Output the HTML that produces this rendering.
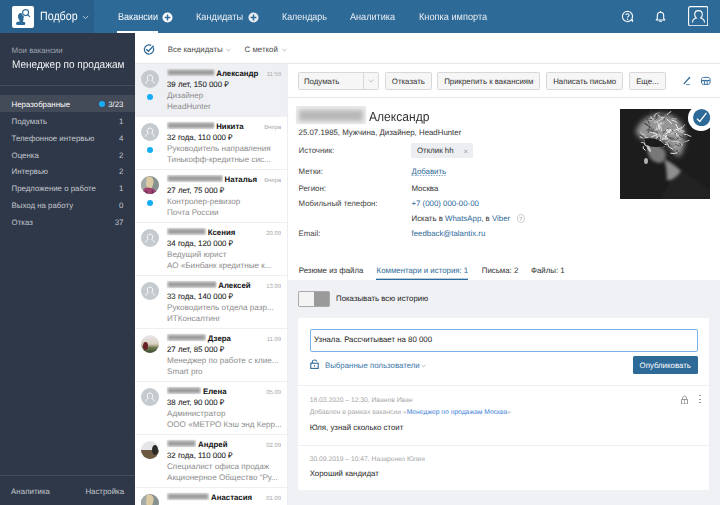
<!DOCTYPE html>
<html><head><meta charset="utf-8"><style>
html,body{margin:0;padding:0;width:720px;height:505px;overflow:hidden;background:#fff;font-family:"Liberation Sans", sans-serif;text-rendering:geometricPrecision;}
</style></head><body>
<div style="position:absolute;left:0px;top:0px;width:720px;height:33px;background:#2e6a98"></div>
<div style="position:absolute;left:0px;top:0px;width:94px;height:33px;background:#285f8b"></div>
<div style="position:absolute;left:117px;top:31px;width:41px;height:2px;background:#fff"></div>
<div style="position:absolute;left:12px;top:6px;width:22px;height:22px;background:#fff;border-radius:2px"></div>
<svg style="position:absolute;left:12px;top:6px" width="22" height="22" viewBox="0 0 22 22">
<ellipse cx="8.9" cy="10.6" rx="2.9" ry="3.5" fill="#2e6a98"/>
<path d="M7.2 12.5 L7.6 16.5 L10.6 16.5 L11.6 13 Z" fill="#2e6a98"/>
<rect x="4.1" y="15.8" width="9.2" height="3.1" rx="1.5" fill="#2e6a98"/>
<circle cx="13.6" cy="6.6" r="3.9" fill="#fff"/><circle cx="13.6" cy="6.6" r="3" fill="#fff" stroke="#2e6a98" stroke-width="1.1"/>
<path d="M15.9 8.9 L17.6 10.6" stroke="#2e6a98" stroke-width="1.2" stroke-linecap="round"/>
</svg>
<div style="position:absolute;left:39.7px;top:10.00px;font-size:12px;line-height:12px;color:#fff;font-weight:400;white-space:nowrap;transform:scaleX(0.89);transform-origin:left center;">Подбор</div>
<svg style="position:absolute;left:82px;top:15px" width="7" height="5" viewBox="0 0 7 5"><path d="M0.8 1 L3.5 3.6 L6.2 1" stroke="#c5d3df" stroke-width="0.9" fill="none"/></svg>
<div style="position:absolute;left:117.5px;top:13.00px;font-size:10px;line-height:10px;color:#fff;font-weight:400;white-space:nowrap;transform:scaleX(0.907);transform-origin:left center;">Вакансии</div>
<div style="position:absolute;left:196.2px;top:13.00px;font-size:10px;line-height:10px;color:#e9eef3;font-weight:400;white-space:nowrap;transform:scaleX(0.918);transform-origin:left center;">Кандидаты</div>
<div style="position:absolute;left:282.2px;top:13.00px;font-size:10px;line-height:10px;color:#e9eef3;font-weight:400;white-space:nowrap;transform:scaleX(0.889);transform-origin:left center;">Календарь</div>
<div style="position:absolute;left:350px;top:13.00px;font-size:10px;line-height:10px;color:#e9eef3;font-weight:400;white-space:nowrap;transform:scaleX(0.911);transform-origin:left center;">Аналитика</div>
<div style="position:absolute;left:418.9px;top:13.00px;font-size:10px;line-height:10px;color:#e9eef3;font-weight:400;white-space:nowrap;transform:scaleX(0.92);transform-origin:left center;">Кнопка импорта</div>
<svg style="position:absolute;left:162.3px;top:11.600000000000001px" width="11" height="11" viewBox="0 0 11 11"><circle cx="5.5" cy="5.5" r="5" fill="#fff"/><path d="M5.5 2.6 V8.4 M2.6 5.5 H8.4" stroke="#2e6a98" stroke-width="1.5"/></svg>
<svg style="position:absolute;left:248.1px;top:11.600000000000001px" width="11" height="11" viewBox="0 0 11 11"><circle cx="5.5" cy="5.5" r="5" fill="#e9eef3"/><path d="M5.5 2.6 V8.4 M2.6 5.5 H8.4" stroke="#2e6a98" stroke-width="1.5"/></svg>
<svg style="position:absolute;left:621px;top:10px" width="13" height="13" viewBox="0 0 13 13">
<path d="M6.5 1.2 A5.2 5.2 0 1 0 10.6 9.7 L11.8 11.6 L11.1 8.6 A5.2 5.2 0 0 0 6.5 1.2 Z" fill="none" stroke="#fff" stroke-width="1.1"/>
<path d="M4.9 5.1 C4.9 3.2 8.1 3.2 8.1 5.1 C8.1 6.3 6.5 6.4 6.5 7.6" fill="none" stroke="#fff" stroke-width="1.1"/>
<circle cx="6.5" cy="9.2" r="0.7" fill="#fff"/></svg>
<svg style="position:absolute;left:654px;top:10px" width="13" height="13" viewBox="0 0 13 13">
<path d="M2.2 10 L3.3 8.6 V5.8 C3.3 3.7 4.7 2.3 6.5 2.3 C8.3 2.3 9.7 3.7 9.7 5.8 V8.6 L10.8 10 Z" fill="none" stroke="#fff" stroke-width="1.1" stroke-linejoin="round"/>
<path d="M5.2 11.3 H7.8" stroke="#fff" stroke-width="1.1"/><path d="M6.5 1 V2.3" stroke="#fff" stroke-width="1"/></svg>
<svg style="position:absolute;left:688px;top:6px" width="20.4" height="20.4" viewBox="0 0 20.4 20.4">
<rect x="0.6" y="0.6" width="19.2" height="19.2" rx="1.5" fill="none" stroke="#fff" stroke-width="1.1"/>
<path d="M4.5 16.5 C4.5 13.8 6 12.6 8.3 12 C7.2 11.1 6.7 9.9 6.7 8.4 C6.7 6.2 8.2 4.6 10.5 4.6 C12.8 4.6 14.3 6.2 14.3 8.4 C14.3 9.9 13.8 11.1 12.7 12 C15 12.6 16.5 13.8 16.5 16.5" fill="none" stroke="#fff" stroke-width="1.1"/></svg>
<div style="position:absolute;left:0px;top:33px;width:135px;height:472px;background:#2f3849"></div>
<div style="position:absolute;left:11.6px;top:47.00px;font-size:7.85px;line-height:7.85px;color:#9ea4ad;font-weight:400;white-space:nowrap;">Мои вакансии</div>
<div style="position:absolute;left:11.6px;top:60.00px;font-size:11px;line-height:11px;color:#f2f3f5;font-weight:400;white-space:nowrap;transform:scaleX(0.913);transform-origin:left center;">Менеджер по продажам</div>
<div style="position:absolute;left:0px;top:85px;width:135px;height:1px;background:#454d5b"></div>
<div style="position:absolute;left:0px;top:95px;width:135px;height:17px;background:#434a58"></div>
<div style="position:absolute;left:11.6px;top:101.00px;font-size:7.85px;line-height:7.85px;color:#ffffff;font-weight:400;white-space:nowrap;">Неразобранные</div>
<div style="position:absolute;right:596.6px;top:101.00px;font-size:7.85px;line-height:7.85px;color:#ffffff;font-weight:400;white-space:nowrap;">3/23</div>
<div style="position:absolute;left:11.6px;top:118.00px;font-size:7.85px;line-height:7.85px;color:#c3c7cd;font-weight:400;white-space:nowrap;">Подумать</div>
<div style="position:absolute;right:596.6px;top:118.00px;font-size:7.85px;line-height:7.85px;color:#c3c7cd;font-weight:400;white-space:nowrap;">1</div>
<div style="position:absolute;left:11.6px;top:135.00px;font-size:7.85px;line-height:7.85px;color:#c3c7cd;font-weight:400;white-space:nowrap;">Телефонное интервью</div>
<div style="position:absolute;right:596.6px;top:135.00px;font-size:7.85px;line-height:7.85px;color:#c3c7cd;font-weight:400;white-space:nowrap;">4</div>
<div style="position:absolute;left:11.6px;top:152.00px;font-size:7.85px;line-height:7.85px;color:#c3c7cd;font-weight:400;white-space:nowrap;">Оценка</div>
<div style="position:absolute;right:596.6px;top:152.00px;font-size:7.85px;line-height:7.85px;color:#c3c7cd;font-weight:400;white-space:nowrap;">2</div>
<div style="position:absolute;left:11.6px;top:168.00px;font-size:7.85px;line-height:7.85px;color:#c3c7cd;font-weight:400;white-space:nowrap;">Интервью</div>
<div style="position:absolute;right:596.6px;top:168.00px;font-size:7.85px;line-height:7.85px;color:#c3c7cd;font-weight:400;white-space:nowrap;">2</div>
<div style="position:absolute;left:11.6px;top:185.00px;font-size:7.85px;line-height:7.85px;color:#c3c7cd;font-weight:400;white-space:nowrap;">Предложение о работе</div>
<div style="position:absolute;right:596.6px;top:185.00px;font-size:7.85px;line-height:7.85px;color:#c3c7cd;font-weight:400;white-space:nowrap;">1</div>
<div style="position:absolute;left:11.6px;top:202.00px;font-size:7.85px;line-height:7.85px;color:#c3c7cd;font-weight:400;white-space:nowrap;">Выход на работу</div>
<div style="position:absolute;right:596.6px;top:202.00px;font-size:7.85px;line-height:7.85px;color:#c3c7cd;font-weight:400;white-space:nowrap;">0</div>
<div style="position:absolute;left:11.6px;top:219.00px;font-size:7.85px;line-height:7.85px;color:#c3c7cd;font-weight:400;white-space:nowrap;">Отказ</div>
<div style="position:absolute;right:596.6px;top:219.00px;font-size:7.85px;line-height:7.85px;color:#c3c7cd;font-weight:400;white-space:nowrap;">37</div>
<div style="position:absolute;left:98.8px;top:100.8px;width:6px;height:6px;background:#14adf4;border-radius:50%"></div>
<div style="position:absolute;left:0px;top:474.5px;width:135px;height:1px;background:#454d5b"></div>
<div style="position:absolute;left:11.1px;top:488.00px;font-size:7.85px;line-height:7.85px;color:#c3c7cd;font-weight:400;white-space:nowrap;">Аналитика</div>
<div style="position:absolute;right:596px;top:488.00px;font-size:7.85px;line-height:7.85px;color:#c3c7cd;font-weight:400;white-space:nowrap;">Настройка</div>
<div style="position:absolute;left:135px;top:33px;width:152px;height:472px;background:#fff"></div>
<svg style="position:absolute;left:143px;top:43.5px" width="12" height="11" viewBox="0 0 12 11">
<path d="M10.2 3.6 A4.6 4.6 0 1 1 8.2 1.4" fill="none" stroke="#2e6a98" stroke-width="1.2"/>
<path d="M3.3 5.2 L5.4 7.3 L10.6 1.8" fill="none" stroke="#2e6a98" stroke-width="1.3"/></svg>
<div style="position:absolute;left:167.8px;top:46.00px;font-size:7.85px;line-height:7.85px;color:#4a4a4a;font-weight:400;white-space:nowrap;">Все кандидаты</div>
<svg style="position:absolute;left:226px;top:48px" width="5" height="4" viewBox="0 0 5 4"><path d="M0.6 1 L2.5 2.8 L4.4 1" stroke="#999" stroke-width="0.7" fill="none"/></svg>
<div style="position:absolute;left:244.6px;top:46.00px;font-size:7.85px;line-height:7.85px;color:#4a4a4a;font-weight:400;white-space:nowrap;">С меткой</div>
<svg style="position:absolute;left:282px;top:48px" width="5" height="4" viewBox="0 0 5 4"><path d="M0.6 1 L2.5 2.8 L4.4 1" stroke="#999" stroke-width="0.7" fill="none"/></svg>
<div style="position:absolute;left:135px;top:63px;width:585px;height:1px;background:#e6e8eb"></div>
<div style="position:absolute;left:135px;top:63.5px;width:152px;height:53px;background:#eff0f4"></div>
<div style="position:absolute;left:135px;top:116px;width:152px;height:1px;background:#efeff1"></div>
<svg style="position:absolute;left:140.7px;top:70px" width="18" height="18" viewBox="0 0 18 18"><circle cx="9" cy="9" r="9" fill="#c4cace"/>
<path d="M4.8 13.6 C4.8 11.8 5.9 11 7.4 10.5 C6.6 9.8 6.3 8.9 6.3 7.9 C6.3 6.2 7.4 5 9 5 C10.6 5 11.7 6.2 11.7 7.9 C11.7 8.9 11.4 9.8 10.6 10.5 C12.1 11 13.2 11.8 13.2 13.6" fill="none" stroke="#fff" stroke-width="0.9"/></svg>
<div style="position:absolute;left:146.7px;top:94px;width:6px;height:6px;background:#14adf4;border-radius:50%"></div>
<div style="position:absolute;left:166.8px;top:68.6px;width:47.699999999999996px;height:7.6px;background:#e6e6e8"></div>
<div style="position:absolute;left:167.8px;top:69.6px;width:45.9px;height:5.8px;background:#979797;filter:blur(1.1px);opacity:.9"></div>
<div style="position:absolute;left:216.3px;top:70.00px;font-size:7.85px;line-height:7.85px;color:#111;font-weight:700;white-space:nowrap;">Александр</div>
<div style="position:absolute;right:438.8px;top:72.00px;font-size:6.0px;line-height:6.0px;color:#a8a8a8;font-weight:400;white-space:nowrap;">11:59</div>
<div style="position:absolute;left:167px;top:81.00px;font-size:7.85px;line-height:7.85px;color:#1e1e1e;font-weight:400;white-space:nowrap;-webkit-text-stroke:0.08px #1e1e1e">39 лет, 150 000 ₽</div>
<div style="position:absolute;left:167px;top:92.00px;font-size:8.12px;line-height:8.12px;color:#8c8c8c;font-weight:400;white-space:nowrap;">Дизайнер</div>
<div style="position:absolute;left:167px;top:103.00px;font-size:8.12px;line-height:8.12px;color:#8c8c8c;font-weight:400;white-space:nowrap;">HeadHunter</div>
<div style="position:absolute;left:135px;top:169px;width:152px;height:1px;background:#efeff1"></div>
<svg style="position:absolute;left:140.7px;top:123px" width="18" height="18" viewBox="0 0 18 18"><circle cx="9" cy="9" r="9" fill="#c4cace"/>
<path d="M4.8 13.6 C4.8 11.8 5.9 11 7.4 10.5 C6.6 9.8 6.3 8.9 6.3 7.9 C6.3 6.2 7.4 5 9 5 C10.6 5 11.7 6.2 11.7 7.9 C11.7 8.9 11.4 9.8 10.6 10.5 C12.1 11 13.2 11.8 13.2 13.6" fill="none" stroke="#fff" stroke-width="0.9"/></svg>
<div style="position:absolute;left:146.7px;top:147px;width:6px;height:6px;background:#14adf4;border-radius:50%"></div>
<div style="position:absolute;left:166.8px;top:121.6px;width:47.6px;height:7.6px;background:#e6e6e8"></div>
<div style="position:absolute;left:167.8px;top:122.6px;width:45.800000000000004px;height:5.8px;background:#979797;filter:blur(1.1px);opacity:.9"></div>
<div style="position:absolute;left:216.2px;top:123.00px;font-size:7.85px;line-height:7.85px;color:#111;font-weight:700;white-space:nowrap;">Никита</div>
<div style="position:absolute;right:438.8px;top:125.00px;font-size:6.0px;line-height:6.0px;color:#a8a8a8;font-weight:400;white-space:nowrap;">Вчера</div>
<div style="position:absolute;left:167px;top:134.00px;font-size:7.85px;line-height:7.85px;color:#1e1e1e;font-weight:400;white-space:nowrap;-webkit-text-stroke:0.08px #1e1e1e">32 года, 110 000 ₽</div>
<div style="position:absolute;left:167px;top:145.00px;font-size:8.12px;line-height:8.12px;color:#8c8c8c;font-weight:400;white-space:nowrap;">Руководитель направления</div>
<div style="position:absolute;left:167px;top:156.00px;font-size:8.12px;line-height:8.12px;color:#8c8c8c;font-weight:400;white-space:nowrap;">Тинькофф-кредитные сис...</div>
<div style="position:absolute;left:135px;top:222px;width:152px;height:1px;background:#efeff1"></div>
<svg style="position:absolute;left:140.7px;top:176px" width="18" height="18" viewBox="0 0 18 18"><defs><clipPath id="cp2"><circle cx="9" cy="9" r="9"/></clipPath></defs><g clip-path="url(#cp2)">
<rect width="18" height="18" fill="#87918f"/><rect width="6" height="18" fill="#a3aaa8"/><path d="M6 1 C9 -0.5 12.5 1 12.5 5 C12.8 8.5 11 11 10.2 13.5 L6.5 14 C5 11 4.5 6 6 1 Z" fill="#dccaa2"/><path d="M1.5 18 L2.5 13.5 C4 11.5 6.5 11.2 8.8 12 C11.5 11.8 14 13 16.5 18 Z" fill="#a0436f"/><path d="M5 14 L7 18 L4 18 Z M11 13 L13 18 L10.5 18 Z" fill="#5e2f55"/></g></svg>
<div style="position:absolute;left:146.7px;top:200px;width:6px;height:6px;background:#14adf4;border-radius:50%"></div>
<div style="position:absolute;left:166.8px;top:174.6px;width:55.9px;height:7.6px;background:#e6e6e8"></div>
<div style="position:absolute;left:167.8px;top:175.6px;width:54.1px;height:5.8px;background:#979797;filter:blur(1.1px);opacity:.9"></div>
<div style="position:absolute;left:224.5px;top:176.00px;font-size:7.85px;line-height:7.85px;color:#111;font-weight:700;white-space:nowrap;">Наталья</div>
<div style="position:absolute;right:438.8px;top:178.00px;font-size:6.0px;line-height:6.0px;color:#a8a8a8;font-weight:400;white-space:nowrap;">Вчера</div>
<div style="position:absolute;left:167px;top:187.00px;font-size:7.85px;line-height:7.85px;color:#1e1e1e;font-weight:400;white-space:nowrap;-webkit-text-stroke:0.08px #1e1e1e">27 лет, 75 000 ₽</div>
<div style="position:absolute;left:167px;top:198.00px;font-size:8.12px;line-height:8.12px;color:#8c8c8c;font-weight:400;white-space:nowrap;">Контролер-ревизор</div>
<div style="position:absolute;left:167px;top:209.00px;font-size:8.12px;line-height:8.12px;color:#8c8c8c;font-weight:400;white-space:nowrap;">Почта России</div>
<div style="position:absolute;left:135px;top:275px;width:152px;height:1px;background:#efeff1"></div>
<svg style="position:absolute;left:140.7px;top:229px" width="18" height="18" viewBox="0 0 18 18"><circle cx="9" cy="9" r="9" fill="#c4cace"/>
<path d="M4.8 13.6 C4.8 11.8 5.9 11 7.4 10.5 C6.6 9.8 6.3 8.9 6.3 7.9 C6.3 6.2 7.4 5 9 5 C10.6 5 11.7 6.2 11.7 7.9 C11.7 8.9 11.4 9.8 10.6 10.5 C12.1 11 13.2 11.8 13.2 13.6" fill="none" stroke="#fff" stroke-width="0.9"/></svg>
<div style="position:absolute;left:166.8px;top:227.6px;width:39.199999999999996px;height:7.6px;background:#e6e6e8"></div>
<div style="position:absolute;left:167.8px;top:228.6px;width:37.4px;height:5.8px;background:#979797;filter:blur(1.1px);opacity:.9"></div>
<div style="position:absolute;left:207.8px;top:229.00px;font-size:7.85px;line-height:7.85px;color:#111;font-weight:700;white-space:nowrap;">Ксения</div>
<div style="position:absolute;right:438.8px;top:231.00px;font-size:6.0px;line-height:6.0px;color:#a8a8a8;font-weight:400;white-space:nowrap;">20.09</div>
<div style="position:absolute;left:167px;top:240.00px;font-size:7.85px;line-height:7.85px;color:#1e1e1e;font-weight:400;white-space:nowrap;-webkit-text-stroke:0.08px #1e1e1e">34 года, 120 000 ₽</div>
<div style="position:absolute;left:167px;top:251.00px;font-size:8.12px;line-height:8.12px;color:#8c8c8c;font-weight:400;white-space:nowrap;">Ведущий юрист</div>
<div style="position:absolute;left:167px;top:262.00px;font-size:8.12px;line-height:8.12px;color:#8c8c8c;font-weight:400;white-space:nowrap;">АО «Бинбанк кредитные к...</div>
<div style="position:absolute;left:135px;top:328px;width:152px;height:1px;background:#efeff1"></div>
<svg style="position:absolute;left:140.7px;top:282px" width="18" height="18" viewBox="0 0 18 18"><circle cx="9" cy="9" r="9" fill="#c4cace"/>
<path d="M4.8 13.6 C4.8 11.8 5.9 11 7.4 10.5 C6.6 9.8 6.3 8.9 6.3 7.9 C6.3 6.2 7.4 5 9 5 C10.6 5 11.7 6.2 11.7 7.9 C11.7 8.9 11.4 9.8 10.6 10.5 C12.1 11 13.2 11.8 13.2 13.6" fill="none" stroke="#fff" stroke-width="0.9"/></svg>
<div style="position:absolute;left:166.8px;top:280.6px;width:49.699999999999996px;height:7.6px;background:#e6e6e8"></div>
<div style="position:absolute;left:167.8px;top:281.6px;width:47.9px;height:5.8px;background:#979797;filter:blur(1.1px);opacity:.9"></div>
<div style="position:absolute;left:218.3px;top:282.00px;font-size:7.85px;line-height:7.85px;color:#111;font-weight:700;white-space:nowrap;">Алексей</div>
<div style="position:absolute;right:438.8px;top:284.00px;font-size:6.0px;line-height:6.0px;color:#a8a8a8;font-weight:400;white-space:nowrap;">13.09</div>
<div style="position:absolute;left:167px;top:293.00px;font-size:7.85px;line-height:7.85px;color:#1e1e1e;font-weight:400;white-space:nowrap;-webkit-text-stroke:0.08px #1e1e1e">33 года, 140 000 ₽</div>
<div style="position:absolute;left:167px;top:304.00px;font-size:8.12px;line-height:8.12px;color:#8c8c8c;font-weight:400;white-space:nowrap;">Руководитель отдела разр...</div>
<div style="position:absolute;left:167px;top:315.00px;font-size:8.12px;line-height:8.12px;color:#8c8c8c;font-weight:400;white-space:nowrap;">ИТКонсалтинг</div>
<div style="position:absolute;left:135px;top:381px;width:152px;height:1px;background:#efeff1"></div>
<svg style="position:absolute;left:140.7px;top:335px" width="18" height="18" viewBox="0 0 18 18"><defs><clipPath id="cp5"><circle cx="9" cy="9" r="9"/></clipPath><linearGradient id="lg5" x1="0" y1="0" x2="0" y2="1"><stop offset="0" stop-color="#e8e8ee"/><stop offset="0.5" stop-color="#d9d0c0"/><stop offset="0.7" stop-color="#6f7a50"/><stop offset="1" stop-color="#3a4a30"/></linearGradient></defs><g clip-path="url(#cp5)">
<rect width="18" height="18" fill="url(#lg5)"/><ellipse cx="4.5" cy="11" rx="2.5" ry="4" fill="#6a2028"/></g></svg>
<div style="position:absolute;left:166.8px;top:333.6px;width:39.199999999999996px;height:7.6px;background:#e6e6e8"></div>
<div style="position:absolute;left:167.8px;top:334.6px;width:37.4px;height:5.8px;background:#979797;filter:blur(1.1px);opacity:.9"></div>
<div style="position:absolute;left:207.8px;top:335.00px;font-size:7.85px;line-height:7.85px;color:#111;font-weight:700;white-space:nowrap;">Дзера</div>
<div style="position:absolute;right:438.8px;top:337.00px;font-size:6.0px;line-height:6.0px;color:#a8a8a8;font-weight:400;white-space:nowrap;">11.09</div>
<div style="position:absolute;left:167px;top:346.00px;font-size:7.85px;line-height:7.85px;color:#1e1e1e;font-weight:400;white-space:nowrap;-webkit-text-stroke:0.08px #1e1e1e">27 лет, 85 000 ₽</div>
<div style="position:absolute;left:167px;top:357.00px;font-size:8.12px;line-height:8.12px;color:#8c8c8c;font-weight:400;white-space:nowrap;">Менеджер по работе с клие...</div>
<div style="position:absolute;left:167px;top:368.00px;font-size:8.12px;line-height:8.12px;color:#8c8c8c;font-weight:400;white-space:nowrap;">Smart pro</div>
<div style="position:absolute;left:135px;top:434px;width:152px;height:1px;background:#efeff1"></div>
<svg style="position:absolute;left:140.7px;top:388px" width="18" height="18" viewBox="0 0 18 18"><circle cx="9" cy="9" r="9" fill="#c4cace"/>
<path d="M4.8 13.6 C4.8 11.8 5.9 11 7.4 10.5 C6.6 9.8 6.3 8.9 6.3 7.9 C6.3 6.2 7.4 5 9 5 C10.6 5 11.7 6.2 11.7 7.9 C11.7 8.9 11.4 9.8 10.6 10.5 C12.1 11 13.2 11.8 13.2 13.6" fill="none" stroke="#fff" stroke-width="0.9"/></svg>
<div style="position:absolute;left:166.8px;top:386.6px;width:34.4px;height:7.6px;background:#e6e6e8"></div>
<div style="position:absolute;left:167.8px;top:387.6px;width:32.6px;height:5.8px;background:#979797;filter:blur(1.1px);opacity:.9"></div>
<div style="position:absolute;left:203.0px;top:388.00px;font-size:7.85px;line-height:7.85px;color:#111;font-weight:700;white-space:nowrap;">Елена</div>
<div style="position:absolute;right:438.8px;top:390.00px;font-size:6.0px;line-height:6.0px;color:#a8a8a8;font-weight:400;white-space:nowrap;">05.09</div>
<div style="position:absolute;left:167px;top:399.00px;font-size:7.85px;line-height:7.85px;color:#1e1e1e;font-weight:400;white-space:nowrap;-webkit-text-stroke:0.08px #1e1e1e">38 лет, 90 000 ₽</div>
<div style="position:absolute;left:167px;top:410.00px;font-size:8.12px;line-height:8.12px;color:#8c8c8c;font-weight:400;white-space:nowrap;">Администратор</div>
<div style="position:absolute;left:167px;top:421.00px;font-size:8.12px;line-height:8.12px;color:#8c8c8c;font-weight:400;white-space:nowrap;">ООО «МЕТРО Кэш энд Керр...</div>
<div style="position:absolute;left:135px;top:487px;width:152px;height:1px;background:#efeff1"></div>
<svg style="position:absolute;left:140.7px;top:441px" width="18" height="18" viewBox="0 0 18 18"><defs><clipPath id="cp7"><circle cx="9" cy="9" r="9"/></clipPath></defs><g clip-path="url(#cp7)">
<rect width="18" height="18" fill="#e6e6ea"/><rect y="9" width="18" height="9" fill="#6e5a40"/><ellipse cx="14" cy="9" rx="3" ry="5" fill="#2a2a2a"/></g></svg>
<div style="position:absolute;left:166.8px;top:439.6px;width:29.5px;height:7.6px;background:#e6e6e8"></div>
<div style="position:absolute;left:167.8px;top:440.6px;width:27.700000000000003px;height:5.8px;background:#979797;filter:blur(1.1px);opacity:.9"></div>
<div style="position:absolute;left:198.1px;top:441.00px;font-size:7.85px;line-height:7.85px;color:#111;font-weight:700;white-space:nowrap;">Андрей</div>
<div style="position:absolute;right:438.8px;top:443.00px;font-size:6.0px;line-height:6.0px;color:#a8a8a8;font-weight:400;white-space:nowrap;">02.09</div>
<div style="position:absolute;left:167px;top:452.00px;font-size:7.85px;line-height:7.85px;color:#1e1e1e;font-weight:400;white-space:nowrap;-webkit-text-stroke:0.08px #1e1e1e">32 года, 110 000 ₽</div>
<div style="position:absolute;left:167px;top:463.00px;font-size:8.12px;line-height:8.12px;color:#8c8c8c;font-weight:400;white-space:nowrap;">Специалист офиса продаж</div>
<div style="position:absolute;left:167px;top:474.00px;font-size:8.12px;line-height:8.12px;color:#8c8c8c;font-weight:400;white-space:nowrap;">Акционерное Общество “Ру...</div>
<svg style="position:absolute;left:140.7px;top:494px" width="18" height="18" viewBox="0 0 18 18"><defs><clipPath id="cp8"><circle cx="9" cy="9" r="9"/></clipPath></defs><g clip-path="url(#cp8)">
<rect width="18" height="18" fill="#87918f"/><rect width="6" height="18" fill="#a3aaa8"/><path d="M6 1 C9 -0.5 12.5 1 12.5 5 C12.8 8.5 11 11 10.2 13.5 L6.5 14 C5 11 4.5 6 6 1 Z" fill="#dccaa2"/><path d="M1.5 18 L2.5 13.5 C4 11.5 6.5 11.2 8.8 12 C11.5 11.8 14 13 16.5 18 Z" fill="#a0436f"/><path d="M5 14 L7 18 L4 18 Z M11 13 L13 18 L10.5 18 Z" fill="#5e2f55"/></g></svg>
<div style="position:absolute;left:166.8px;top:492.6px;width:42.4px;height:7.6px;background:#e6e6e8"></div>
<div style="position:absolute;left:167.8px;top:493.6px;width:40.6px;height:5.8px;background:#979797;filter:blur(1.1px);opacity:.9"></div>
<div style="position:absolute;left:211.0px;top:494.00px;font-size:7.85px;line-height:7.85px;color:#111;font-weight:700;white-space:nowrap;">Анастасия</div>
<div style="position:absolute;right:438.8px;top:496.00px;font-size:6.0px;line-height:6.0px;color:#a8a8a8;font-weight:400;white-space:nowrap;">01.09</div>
<div style="position:absolute;left:287px;top:63px;width:1px;height:442px;background:#eceef1"></div>
<div style="position:absolute;left:288px;top:97px;width:432px;height:1px;background:#e6e8eb"></div>
<div style="position:absolute;left:298.3px;top:72px;width:81.2px;height:18px;background:#f6f6f6;border:1px solid #d8d8d8;box-sizing:border-box;border-radius:1.5px"></div>
<div style="position:absolute;left:303.9px;top:78.00px;font-size:7.85px;line-height:7.85px;color:#333;font-weight:400;white-space:nowrap;">Подумать</div>
<div style="position:absolute;left:363.4px;top:72px;width:1px;height:18px;background:#d8d8d8"></div>
<svg style="position:absolute;left:368px;top:79px" width="6" height="4" viewBox="0 0 6 4"><path d="M0.7 0.8 L3 3 L5.3 0.8" stroke="#aaa" stroke-width="0.7" fill="none"/></svg>
<div style="position:absolute;left:385px;top:72px;width:46.7px;height:18px;background:#f6f6f6;border:1px solid #d8d8d8;box-sizing:border-box;border-radius:1.5px"></div>
<div style="position:absolute;left:408.35px;top:78.00px;font-size:7.85px;line-height:7.85px;color:#333;font-weight:400;white-space:nowrap;transform:translateX(-50%)">Отказать</div>
<div style="position:absolute;left:437.2px;top:72px;width:103.2px;height:18px;background:#f6f6f6;border:1px solid #d8d8d8;box-sizing:border-box;border-radius:1.5px"></div>
<div style="position:absolute;left:488.8px;top:78.00px;font-size:7.85px;line-height:7.85px;color:#333;font-weight:400;white-space:nowrap;transform:translateX(-50%)">Прикрепить к вакансиям</div>
<div style="position:absolute;left:546.2px;top:72px;width:77px;height:18px;background:#f6f6f6;border:1px solid #d8d8d8;box-sizing:border-box;border-radius:1.5px"></div>
<div style="position:absolute;left:584.7px;top:78.00px;font-size:7.85px;line-height:7.85px;color:#333;font-weight:400;white-space:nowrap;transform:translateX(-50%)">Написать письмо</div>
<div style="position:absolute;left:629.2px;top:72px;width:36.4px;height:18px;background:#f6f6f6;border:1px solid #d8d8d8;box-sizing:border-box;border-radius:1.5px"></div>
<div style="position:absolute;left:647.4000000000001px;top:78.00px;font-size:7.85px;line-height:7.85px;color:#333;font-weight:400;white-space:nowrap;transform:translateX(-50%)">Еще...</div>
<svg style="position:absolute;left:682px;top:75px" width="10" height="11" viewBox="0 0 10 11"><path d="M2.1 8.6 L7.6 2.5" stroke="#2e6a98" stroke-width="1.3" stroke-linecap="round"/><path d="M4.2 9.6 H7.8" stroke="#2e6a98" stroke-width="0.8"/></svg>
<svg style="position:absolute;left:701px;top:76px" width="10" height="10" viewBox="0 0 10 10"><path d="M2.6 1.4 H7 C8.4 1.4 9.1 2.4 9.1 3.6 V6.2 C9.1 7.6 8.3 8.4 7.1 8.4 H2.5 C1.3 8.4 0.5 7.6 0.5 6.2 V3.6 C0.5 2.4 1.2 1.4 2.6 1.4 Z" fill="none" stroke="#3a74a3" stroke-width="1"/><rect x="0.8" y="3.9" width="8" height="1.4" fill="#3a74a3"/><rect x="3" y="5.2" width="0.9" height="3" fill="#3a74a3"/><rect x="5.7" y="5.2" width="0.9" height="3" fill="#3a74a3"/></svg>
<div style="position:absolute;left:296px;top:106px;width:70px;height:17.8px;background:#ececec"></div>
<div style="position:absolute;left:299px;top:109.5px;width:64px;height:11px;background:#b8b8b8;filter:blur(2.2px)"></div>
<div style="position:absolute;left:368.7px;top:110.00px;font-size:13px;line-height:13px;color:#333;font-weight:400;white-space:nowrap;transform:scaleX(0.93);transform-origin:left center;">Александр</div>
<div style="position:absolute;left:298.6px;top:129.00px;font-size:7.85px;line-height:7.85px;color:#333;font-weight:400;white-space:nowrap;">25.07.1985, Мужчина, Дизайнер, HeadHunter</div>
<div style="position:absolute;left:298.6px;top:147.00px;font-size:7.85px;line-height:7.85px;color:#444;font-weight:400;white-space:nowrap;">Источник:</div>
<div style="position:absolute;left:411.3px;top:142.6px;width:61.7px;height:15.3px;background:#eceef1;border-radius:1px"></div>
<div style="position:absolute;left:417px;top:147.00px;font-size:7.85px;line-height:7.85px;color:#333;font-weight:400;white-space:nowrap;">Отклик hh</div>
<div style="position:absolute;left:463.5px;top:148.00px;font-size:7.85px;line-height:7.85px;color:#9a9a9a;font-weight:400;white-space:nowrap;">×</div>
<div style="position:absolute;left:298.6px;top:168.00px;font-size:7.85px;line-height:7.85px;color:#444;font-weight:400;white-space:nowrap;">Метки:</div>
<div style="position:absolute;left:411.5px;top:168.00px;font-size:7.85px;line-height:7.85px;color:#2e6a98;font-weight:400;white-space:nowrap;">Добавить</div>
<div style="position:absolute;left:411.5px;top:175.4px;width:34px;height:0.8px;background-image:linear-gradient(90deg,#7ea3c4 50%,transparent 50%);background-size:1.6px 1px"></div>
<div style="position:absolute;left:298.6px;top:185.00px;font-size:7.85px;line-height:7.85px;color:#444;font-weight:400;white-space:nowrap;">Регион:</div>
<div style="position:absolute;left:411.5px;top:185.00px;font-size:7.85px;line-height:7.85px;color:#333;font-weight:400;white-space:nowrap;">Москва</div>
<div style="position:absolute;left:298.6px;top:200.00px;font-size:7.85px;line-height:7.85px;color:#444;font-weight:400;white-space:nowrap;">Мобильный телефон:</div>
<div style="position:absolute;left:411.5px;top:200.00px;font-size:7.85px;line-height:7.85px;color:#2e6a98;font-weight:400;white-space:nowrap;">+7 (000) 000-00-00</div>
<div style="position:absolute;left:411.5px;top:215.00px;font-size:7.85px;line-height:7.85px;color:#333;font-weight:400;white-space:nowrap;">Искать в <span style="color:#2e6a98">WhatsApp</span>, в <span style="color:#2e6a98">Viber</span></div>
<div style="position:absolute;left:516.5px;top:214.3px;width:8.5px;height:8.5px;border:0.8px solid #d0d0d0;border-radius:50%;box-sizing:border-box"></div>
<div style="position:absolute;left:519.1px;top:217.00px;font-size:6px;line-height:6px;color:#999;font-weight:400;white-space:nowrap;">?</div>
<div style="position:absolute;left:298.6px;top:230.00px;font-size:7.85px;line-height:7.85px;color:#444;font-weight:400;white-space:nowrap;">Email:</div>
<div style="position:absolute;left:411.5px;top:230.00px;font-size:7.85px;line-height:7.85px;color:#2e6a98;font-weight:400;white-space:nowrap;">feedback@talantix.ru</div>
<svg style="position:absolute;left:620px;top:109px" width="90" height="90" viewBox="0 0 90 90">
<defs><filter id="bl3" x="-30%" y="-30%" width="160%" height="160%"><feGaussianBlur stdDeviation="2.4"/></filter>
<filter id="bl2" x="-30%" y="-30%" width="160%" height="160%"><feGaussianBlur stdDeviation="1.5"/></filter>
<filter id="bl1" x="-30%" y="-30%" width="160%" height="160%"><feGaussianBlur stdDeviation="0.45"/></filter></defs>
<rect width="90" height="90" fill="#1c1c1c"/>
<path d="M60 62 C68 66 78 72 90 82 L90 90 L40 90 C46 80 52 70 60 62 Z" fill="#222" filter="url(#bl2)"/>
<path d="M16 22 C20 10 32 4 44 5 C56 6 65 14 65 28 C65 38 62 46 58 48 C54 44 50 38 46 34 C40 30 30 30 24 31 C20 28 16 26 16 22 Z" fill="#959595" filter="url(#bl3)"/>
<g fill="none" filter="url(#bl1)" stroke-linecap="round">
<path d="M37.5 28.6 Q38.5 31.6 39.4 33.6" stroke="#3a3a3a" stroke-width="0.8"/>
<path d="M40.6 31.7 Q40.8 31.0 42.9 34.3" stroke="#e6e6e6" stroke-width="1.0"/>
<path d="M45.0 21.4 Q49.1 22.0 51.7 21.3" stroke="#e6e6e6" stroke-width="1.0"/>
<path d="M38.1 23.4 Q40.4 25.7 41.2 28.1" stroke="#bcbcbc" stroke-width="1.0"/>
<path d="M48.0 21.9 Q49.7 21.6 55.5 23.7" stroke="#f0f0f0" stroke-width="1.0"/>
<path d="M29.1 6.9 Q29.0 6.1 31.7 1.1" stroke="#3a3a3a" stroke-width="0.8"/>
<path d="M33.5 35.2 Q34.9 35.8 39.3 34.6" stroke="#f0f0f0" stroke-width="1.0"/>
<path d="M53.4 9.2 Q52.7 9.7 56.4 7.3" stroke="#3a3a3a" stroke-width="0.8"/>
<path d="M43.1 23.7 Q43.8 22.2 48.2 19.4" stroke="#3a3a3a" stroke-width="0.8"/>
<path d="M35.9 13.4 Q40.8 10.5 42.8 9.6" stroke="#d4d4d4" stroke-width="1.0"/>
<path d="M45.3 29.4 Q45.9 25.3 47.0 26.1" stroke="#f0f0f0" stroke-width="1.0"/>
<path d="M34.1 7.3 Q34.1 4.7 39.0 3.5" stroke="#d4d4d4" stroke-width="1.0"/>
<path d="M63.9 25.3 Q65.8 24.6 70.9 27.4" stroke="#d4d4d4" stroke-width="1.0"/>
<path d="M51.7 11.0 Q55.3 11.6 57.0 13.4" stroke="#e6e6e6" stroke-width="1.0"/>
<path d="M35.9 8.6 Q36.4 6.1 39.5 1.6" stroke="#3a3a3a" stroke-width="0.8"/>
<path d="M56.8 30.2 Q59.7 27.3 60.3 28.6" stroke="#3a3a3a" stroke-width="0.8"/>
<path d="M43.1 41.5 Q47.2 40.9 47.1 43.2" stroke="#3a3a3a" stroke-width="0.8"/>
<path d="M28.0 23.6 Q28.3 22.3 30.0 20.3" stroke="#3a3a3a" stroke-width="0.8"/>
<path d="M32.8 43.2 Q34.5 46.7 34.2 49.3" stroke="#3a3a3a" stroke-width="0.8"/>
<path d="M61.3 34.8 Q62.4 36.3 62.2 37.8" stroke="#f0f0f0" stroke-width="1.0"/>
<path d="M37.6 20.2 Q40.5 14.9 41.2 13.4" stroke="#f0f0f0" stroke-width="1.0"/>
<path d="M32.3 34.1 Q33.4 38.9 35.4 40.8" stroke="#e6e6e6" stroke-width="1.0"/>
<path d="M46.5 20.8 Q47.3 22.5 52.2 22.7" stroke="#bcbcbc" stroke-width="1.0"/>
<path d="M51.9 21.1 Q53.8 24.7 56.3 24.9" stroke="#3a3a3a" stroke-width="0.8"/>
<path d="M45.3 25.2 Q47.9 23.9 50.6 21.5" stroke="#f0f0f0" stroke-width="1.0"/>
<path d="M60.6 20.2 Q62.8 19.2 64.7 15.7" stroke="#bcbcbc" stroke-width="1.0"/>
<path d="M39.9 14.6 Q42.7 15.8 44.1 14.0" stroke="#d4d4d4" stroke-width="1.0"/>
<path d="M59.8 20.9 Q60.1 21.6 64.1 22.3" stroke="#e6e6e6" stroke-width="1.0"/>
<path d="M28.4 11.4 Q29.2 10.9 32.8 11.3" stroke="#bcbcbc" stroke-width="1.0"/>
<path d="M49.0 35.5 Q49.7 39.7 52.3 40.6" stroke="#3a3a3a" stroke-width="0.8"/>
<path d="M45.6 33.8 Q48.5 33.1 49.8 31.7" stroke="#bcbcbc" stroke-width="1.0"/>
<path d="M37.7 5.1 Q37.1 4.5 40.1 8.5" stroke="#bcbcbc" stroke-width="1.0"/>
<path d="M19.7 27.6 Q19.7 27.1 24.0 29.7" stroke="#f0f0f0" stroke-width="1.0"/>
<path d="M38.6 35.4 Q39.4 34.9 41.8 32.5" stroke="#d4d4d4" stroke-width="1.0"/>
<path d="M34.5 38.8 Q37.3 41.5 35.8 42.0" stroke="#3a3a3a" stroke-width="0.8"/>
<path d="M37.6 31.5 Q38.9 35.7 39.5 36.0" stroke="#f0f0f0" stroke-width="1.0"/>
<path d="M38.1 32.7 Q42.3 31.3 43.3 28.6" stroke="#d4d4d4" stroke-width="1.0"/>
<path d="M26.6 21.2 Q30.3 21.5 29.2 17.4" stroke="#3a3a3a" stroke-width="0.8"/>
<path d="M40.2 5.6 Q41.6 7.0 45.1 4.1" stroke="#3a3a3a" stroke-width="0.8"/>
<path d="M59.1 22.9 Q61.3 22.4 61.6 17.8" stroke="#bcbcbc" stroke-width="1.0"/>
<path d="M63.2 25.7 Q62.3 27.4 64.2 28.9" stroke="#3a3a3a" stroke-width="0.8"/>
<path d="M51.9 32.1 Q55.8 31.7 59.0 33.3" stroke="#d4d4d4" stroke-width="1.0"/>
<path d="M29.8 10.2 Q32.0 10.2 34.1 11.1" stroke="#3a3a3a" stroke-width="0.8"/>
<path d="M42.0 5.9 Q45.5 6.7 44.1 11.2" stroke="#3a3a3a" stroke-width="0.8"/>
<path d="M37.9 44.5 Q38.2 46.4 41.1 48.4" stroke="#bcbcbc" stroke-width="1.0"/>
<path d="M41.3 8.8 Q41.7 9.6 44.4 8.4" stroke="#e6e6e6" stroke-width="1.0"/>
<path d="M24.1 14.0 Q25.3 15.9 27.9 16.6" stroke="#3a3a3a" stroke-width="0.8"/>
<path d="M52.0 9.4 Q52.6 9.8 56.2 9.9" stroke="#bcbcbc" stroke-width="1.0"/>
<path d="M46.9 40.3 Q51.4 41.6 52.2 42.5" stroke="#3a3a3a" stroke-width="0.8"/>
<path d="M25.2 27.9 Q29.1 29.1 28.7 29.1" stroke="#d4d4d4" stroke-width="1.0"/>
<path d="M30.4 17.9 Q33.7 21.7 31.9 21.7" stroke="#3a3a3a" stroke-width="0.8"/>
<path d="M26.4 36.0 Q29.6 34.7 29.5 34.2" stroke="#d4d4d4" stroke-width="1.0"/>
<path d="M24.4 31.6 Q25.9 32.3 26.7 34.3" stroke="#f0f0f0" stroke-width="1.0"/>
<path d="M20.0 26.2 Q22.9 26.6 24.0 30.1" stroke="#3a3a3a" stroke-width="0.8"/>
<path d="M42.7 26.7 Q42.9 25.7 46.3 27.7" stroke="#f0f0f0" stroke-width="1.0"/>
<path d="M38.0 37.6 Q40.6 36.4 43.0 35.8" stroke="#e6e6e6" stroke-width="1.0"/>
<path d="M47.0 5.8 Q48.2 3.6 50.9 2.6" stroke="#d4d4d4" stroke-width="1.0"/>
<path d="M30.8 7.7 Q34.9 13.0 34.9 13.9" stroke="#d4d4d4" stroke-width="1.0"/>
<path d="M55.9 15.4 Q58.6 20.0 58.5 21.6" stroke="#f0f0f0" stroke-width="1.0"/>
<path d="M59.8 34.6 Q61.7 38.1 64.5 39.4" stroke="#3a3a3a" stroke-width="0.8"/>
<path d="M31.8 24.6 Q33.4 23.0 33.6 20.2" stroke="#3a3a3a" stroke-width="0.8"/>
<path d="M63.1 33.3 Q66.5 32.5 69.1 31.3" stroke="#bcbcbc" stroke-width="1.0"/>
<path d="M47.4 34.9 Q47.8 38.2 53.0 40.4" stroke="#f0f0f0" stroke-width="1.0"/>
<path d="M37.1 26.2 Q36.8 27.2 41.5 30.6" stroke="#3a3a3a" stroke-width="0.8"/>
<path d="M31.7 27.8 Q36.2 25.4 37.3 27.1" stroke="#e6e6e6" stroke-width="1.0"/>
<path d="M42.6 33.4 Q45.5 35.2 44.0 38.1" stroke="#bcbcbc" stroke-width="1.0"/>
<path d="M42.2 30.2 Q43.8 29.5 47.6 29.8" stroke="#f0f0f0" stroke-width="1.0"/>
<path d="M39.1 15.9 Q41.5 16.5 41.3 21.8" stroke="#e6e6e6" stroke-width="1.0"/>
<path d="M46.9 22.0 Q47.4 22.4 49.6 23.8" stroke="#f0f0f0" stroke-width="1.0"/>
<path d="M36.3 25.0 Q37.0 29.2 37.3 29.1" stroke="#bcbcbc" stroke-width="1.0"/>
<path d="M26.7 35.1 Q26.1 34.7 29.2 30.6" stroke="#d4d4d4" stroke-width="1.0"/>
<path d="M20.5 23.5 Q21.5 25.2 25.0 26.2" stroke="#d4d4d4" stroke-width="1.0"/>
<path d="M26.4 9.0 Q28.5 11.4 29.4 15.2" stroke="#3a3a3a" stroke-width="0.8"/>
<path d="M49.6 28.9 Q53.8 28.3 55.4 30.9" stroke="#3a3a3a" stroke-width="0.8"/>
<path d="M36.1 31.4 Q35.7 27.1 39.5 26.8" stroke="#d4d4d4" stroke-width="1.0"/>
<path d="M46.8 20.4 Q48.1 21.7 50.9 20.6" stroke="#e6e6e6" stroke-width="1.0"/>
<path d="M55.7 23.7 Q59.2 26.3 60.0 29.5" stroke="#bcbcbc" stroke-width="1.0"/>
<path d="M56.1 20.2 Q58.7 22.4 63.1 24.0" stroke="#d4d4d4" stroke-width="1.0"/>
<path d="M36.2 20.2 Q36.3 15.2 40.5 14.3" stroke="#bcbcbc" stroke-width="1.0"/>
<path d="M56.4 24.4 Q56.3 27.7 58.2 26.9" stroke="#f0f0f0" stroke-width="1.0"/>
<path d="M39.7 37.6 Q41.8 37.1 46.7 35.1" stroke="#e6e6e6" stroke-width="1.0"/>
<path d="M30.8 23.4 Q35.2 23.6 37.8 26.0" stroke="#f0f0f0" stroke-width="1.0"/>
<path d="M37.8 13.7 Q38.7 14.9 39.5 20.2" stroke="#e6e6e6" stroke-width="1.0"/>
<path d="M32.9 21.4 Q35.2 22.5 36.8 20.6" stroke="#d4d4d4" stroke-width="1.0"/>
<path d="M23.2 37.4 Q21.8 39.4 25.2 41.3" stroke="#f0f0f0" stroke-width="1.0"/>
<path d="M64.3 32.7 Q65.5 35.4 66.3 35.2" stroke="#3a3a3a" stroke-width="0.8"/>
<path d="M47.0 10.3 Q48.0 11.0 51.6 14.5" stroke="#f0f0f0" stroke-width="1.0"/>
<path d="M53.8 21.4 Q58.3 20.1 61.2 18.9" stroke="#e6e6e6" stroke-width="1.0"/>
<path d="M50.8 44.3 Q55.2 45.6 57.9 43.3" stroke="#e6e6e6" stroke-width="1.0"/>
<path d="M47.3 27.0 Q49.7 28.8 52.9 31.3" stroke="#3a3a3a" stroke-width="0.8"/>
<path d="M33.5 11.4 Q34.5 12.1 37.5 8.2" stroke="#3a3a3a" stroke-width="0.8"/>
<path d="M30.0 9.1 Q31.5 8.5 36.1 12.3" stroke="#bcbcbc" stroke-width="1.0"/>
<path d="M25.3 14.4 Q26.3 14.6 30.0 18.0" stroke="#3a3a3a" stroke-width="0.8"/>
<path d="M23.0 37.3 Q27.2 36.1 28.3 35.2" stroke="#3a3a3a" stroke-width="0.8"/>
<path d="M31.8 28.1 Q31.1 28.4 33.3 33.3" stroke="#bcbcbc" stroke-width="1.0"/>
<path d="M54.3 38.7 Q58.1 37.2 58.1 32.0" stroke="#bcbcbc" stroke-width="1.0"/>
<path d="M55.4 35.4 Q55.5 35.2 59.0 36.8" stroke="#3a3a3a" stroke-width="0.8"/>
<path d="M59.2 26.7 Q61.6 28.6 66.4 30.2" stroke="#3a3a3a" stroke-width="0.8"/>
<path d="M56.7 41.2 Q56.6 43.7 58.7 44.0" stroke="#3a3a3a" stroke-width="0.8"/>
<path d="M39.0 24.6 Q41.6 26.5 40.6 30.3" stroke="#bcbcbc" stroke-width="1.0"/>
<path d="M24.0 34.0 Q23.5 35.5 27.5 37.9" stroke="#f0f0f0" stroke-width="1.0"/>
<path d="M30.4 21.8 Q35.1 20.7 38.2 23.8" stroke="#3a3a3a" stroke-width="0.8"/>
<path d="M21.3 33.4 Q25.6 33.3 27.0 36.9" stroke="#bcbcbc" stroke-width="1.0"/>
<path d="M51.0 24.9 Q54.0 25.9 54.2 23.4" stroke="#d4d4d4" stroke-width="1.0"/>
<path d="M46.6 45.2 Q50.8 48.2 52.3 50.5" stroke="#3a3a3a" stroke-width="0.8"/>
</g>
<path d="M28 38 C33 34 41 36 45 42 C47 48 45 53 40 54 C35 54 31 51 29 47 C27 43 27 40 28 38 Z" fill="#787878" filter="url(#bl2)"/>
<path d="M27 35 C30 37 31 40 31 43 C29 43 28 41 27 39 Z" fill="#c8c8c8" filter="url(#bl1)"/>
<path d="M24 30 C32 28 40 30 46 37 C39 39 32 38 26 36 Z" fill="#1a1a1a" filter="url(#bl1)"/>
<path d="M44 50 C48 52 55 56 61 62 C57 68 52 72 47 71 C47 63 46 56 44 50 Z" fill="#8e8e8e" filter="url(#bl2)"/>
<ellipse cx="26" cy="52" rx="2" ry="3" fill="#b0b0b0" filter="url(#bl1)"/>
</svg>
<div style="position:absolute;left:688.4px;top:105.4px;width:25.6px;height:25.6px;background:#fff;border-radius:50%"></div>
<svg style="position:absolute;left:692.7px;top:109.2px" width="17.2" height="17.2" viewBox="0 0 17.2 17.2"><circle cx="8.6" cy="8.6" r="8.6" fill="#2e6a98"/><path d="M4 9.8 L6.8 12.5 L13.5 3.9" stroke="#fff" stroke-width="1.25" fill="none"/></svg>
<div style="position:absolute;left:298.75px;top:267.00px;font-size:7.85px;line-height:7.85px;color:#333;font-weight:400;white-space:nowrap;">Резюме из файла</div>
<div style="position:absolute;left:376.6px;top:267.00px;font-size:7.85px;line-height:7.85px;color:#2e6a98;font-weight:400;white-space:nowrap;">Комментари и история: 1</div>
<div style="position:absolute;left:376.4px;top:278px;width:91.4px;height:1px;background:rgba(46,106,152,.35)"></div>
<div style="position:absolute;left:376.4px;top:279px;width:91.4px;height:1px;background:#2e6a98"></div>
<div style="position:absolute;left:481.8px;top:267.00px;font-size:7.85px;line-height:7.85px;color:#333;font-weight:400;white-space:nowrap;">Письма: 2</div>
<div style="position:absolute;left:531px;top:267.00px;font-size:7.85px;line-height:7.85px;color:#333;font-weight:400;white-space:nowrap;">Файлы: 1</div>
<div style="position:absolute;left:288px;top:280px;width:432px;height:225px;background:#f0f1f5"></div>
<div style="position:absolute;left:298.2px;top:291.1px;width:31.7px;height:15.8px;background:#9a9a9a;border:1px solid #aaa;box-sizing:border-box;border-radius:1.5px"></div>
<div style="position:absolute;left:299.2px;top:292.1px;width:14.5px;height:13.8px;background:#f4f4f4"></div>
<div style="position:absolute;left:336px;top:295.00px;font-size:7.85px;line-height:7.85px;color:#222;font-weight:400;white-space:nowrap;">Показывать всю историю</div>
<div style="position:absolute;left:298.2px;top:318.2px;width:410.8px;height:172px;background:#fff"></div>
<div style="position:absolute;left:309.5px;top:329.4px;width:188.1px;height:22.2px;width:388.1px;border:1px solid #79b3ea;box-sizing:border-box;border-radius:2px;background:#fff"></div>
<div style="position:absolute;left:314px;top:336.00px;font-size:7.85px;line-height:7.85px;color:#222;font-weight:400;white-space:nowrap;">Узнала. Рассчитывает на 80 000</div>
<svg style="position:absolute;left:310px;top:359px" width="9" height="10" viewBox="0 0 9 10"><rect x="0.8" y="4.2" width="7.4" height="5.2" fill="none" stroke="#2e6a98" stroke-width="1.1"/><path d="M2.3 4.2 V2.8 C2.3 0.6 6.5 0.4 6.7 2.4" fill="none" stroke="#2e6a98" stroke-width="1.1"/><path d="M4.5 6 V7.6" stroke="#2e6a98" stroke-width="1"/></svg>
<div style="position:absolute;left:325px;top:362.00px;font-size:7.85px;line-height:7.85px;color:#3a75a8;font-weight:400;white-space:nowrap;">Выбранные пользователи</div>
<svg style="position:absolute;left:421px;top:363.5px" width="5" height="4" viewBox="0 0 5 4"><path d="M0.6 1 L2.5 2.8 L4.4 1" stroke="#99a" stroke-width="0.7" fill="none"/></svg>
<div style="position:absolute;left:632.7px;top:356.1px;width:64.9px;height:17.9px;background:#2e6a98;border-radius:1.5px"></div>
<div style="position:absolute;left:665.2px;top:362.00px;font-size:7.85px;line-height:7.85px;color:#fff;font-weight:400;white-space:nowrap;transform:translateX(-50%)">Опубликовать</div>
<div style="position:absolute;left:298.2px;top:384.8px;width:410.8px;height:1px;background:#eef0f3"></div>
<div style="position:absolute;left:309.7px;top:398.00px;font-size:6.76px;line-height:6.76px;color:#a5a5a5;font-weight:400;white-space:nowrap;">18.03.2020 – 12:30, Иванов Иван</div>
<div style="position:absolute;left:309.7px;top:410.00px;font-size:6.78px;line-height:6.78px;color:#a8a8a8;font-weight:400;white-space:nowrap;">Добавлен в рамках вакансии «<span style="color:#3d7fd6">Менеджер по продажам Москва</span>»</div>
<svg style="position:absolute;left:680.5px;top:394.5px" width="7" height="9.5" viewBox="0 0 7 9.5"><path d="M1.6 4.6 V2.8 C1.6 0.6 5.4 0.6 5.4 2.8 V4.6" fill="none" stroke="#8d8d8d" stroke-width="0.9"/><rect x="0.6" y="4.6" width="5.8" height="4.4" fill="none" stroke="#8d8d8d" stroke-width="0.9"/><path d="M3.5 4.6 V9" stroke="#8d8d8d" stroke-width="0.7"/></svg>
<div style="position:absolute;left:699.4px;top:395.1px;width:1.3px;height:1.3px;background:#9a9a9a"></div>
<div style="position:absolute;left:699.4px;top:398.5px;width:1.3px;height:1.3px;background:#9a9a9a"></div>
<div style="position:absolute;left:699.4px;top:401.90000000000003px;width:1.3px;height:1.3px;background:#9a9a9a"></div>
<div style="position:absolute;left:309.7px;top:424.00px;font-size:7.85px;line-height:7.85px;color:#2a2a2a;font-weight:400;white-space:nowrap;">Юля, узнай сколько стоит</div>
<div style="position:absolute;left:298.2px;top:444.5px;width:410.8px;height:1px;background:#eef0f3"></div>
<div style="position:absolute;left:309.7px;top:457.00px;font-size:6.76px;line-height:6.76px;color:#a5a5a5;font-weight:400;white-space:nowrap;">30.09.2019 – 10:47, Назаренко Юлия</div>
<div style="position:absolute;left:309.7px;top:470.00px;font-size:7.85px;line-height:7.85px;color:#2a2a2a;font-weight:400;white-space:nowrap;">Хороший кандидат</div>
</body></html>
